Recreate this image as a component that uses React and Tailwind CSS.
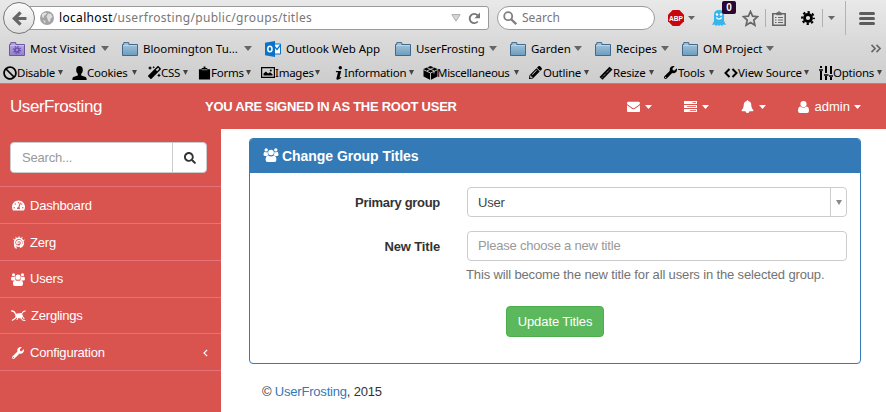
import React from 'react';
import {
  FaTachometerAlt, FaWrench, FaSearch, FaBan, FaMagic, FaPencilAlt,
} from 'react-icons/fa';

const ENVELOPE = 'M1792 710v794q0 66-47 113t-113 47h-1472q-66 0-113-47t-47-113v-794q44 49 101 87 362 246 497 345 57 42 92.5 65.5t94.5 48 110 24.5h2q51 0 110-24.5t94.5-48 92.5-65.5q170-123 498-345 57-39 100-87zm0-294q0 79-49 151t-122 123q-376 261-468 325-10 7-42.5 31t-54 38.5-52 32.5-57.5 27-50 9h-2q-23 0-50-9t-57.5-27-52-32.5-54-38.5-42.5-31q-91-64-262-182.5t-205-142.5q-62-42-117-115.5t-55-136.5q0-78 41.5-130t118.5-52h1472q65 0 112.5 47t47.5 113z';
const BELL = 'M1728 1408q0 52-38 90t-90 38h-448q0 106-75 181t-181 75-181-75-75-181h-448q-52 0-90-38t-38-90q50-42 91-88t85-119.5 74.5-158.5 50-206 19.5-260q0-152 117-282.5t307-158.5q-8-19-8-39 0-40 28-68t68-28 68 28 28 68q0 20-8 39 190 28 307 158.5t117 282.5q0 139 19.5 260t50 206 74.5 158.5 85 119.5 91 88z';

function Glyph({ d, box = '0 0 1792 1792', className }) {
  return (
    <svg viewBox={box} className={className} fill="currentColor"><path d={d} /></svg>
  );
}

function Users({ className }) {
  return (
    <svg viewBox="0 0 15 14" className={className} fill="currentColor">
      <circle cx="2.700" cy="1.900" r="1.700" />
      <circle cx="12.300" cy="1.900" r="1.700" />
      <circle cx="7.500" cy="4.500" r="2.800" />
      <path d="M1.200 3.700q1.500 1 3 .2-.3 2 .8 3.300-1 .1-1.700.8H1.600Q0 8 0 6.700 0 4 1.200 3.700zM13.800 3.700q-1.500 1-3 .2.3 2-.8 3.300 1 .1 1.700.8h1.700Q15 8 15 6.700 15 4 13.800 3.700z" />
      <path d="M4.600 7.500q2.900 1.800 5.800 0 2.500.3 2.500 4.300 0 2.200-2 2.200H4.100q-2 0-2-2.200 0-4 2.500-4.300z" />
    </svg>
  );
}

function User({ className }) {
  return (
    <svg viewBox="0 0 11 12" className={className} fill="currentColor">
      <circle cx="5.500" cy="3.100" r="3.100" />
      <path d="M2.700 5.500q2.800 2.400 5.600 0Q11 5.500 11 9.800q0 2.200-2 2.200H2q-2 0-2-2.200 0-4.300 2.700-4.300z" />
    </svg>
  );
}

function Triangle({ className }) {
  return <svg viewBox="0 0 8 4" preserveAspectRatio="none" className={'shrink-0 ' + className} fill="currentColor"><path d="M0 0h8L4 4z" /></svg>;
}

function Folder({ purple }) {
  const line = purple ? '#6b56a3' : '#41698c';
  return (
    <svg viewBox="0 0 16 14" className="h-[14px] w-4 shrink-0">
      <defs>
        <linearGradient id={purple ? 'fp' : 'fb'} x1="0" y1="0" x2="0" y2="1">
          <stop offset="0" stopColor={purple ? '#b9acdf' : '#a9c8dd'} />
          <stop offset="1" stopColor={purple ? '#9381cb' : '#6d9cbe'} />
        </linearGradient>
      </defs>
      <path d="M.5 13.5V2.500h1.300V.6h5v1.900h8.700v11z" fill={purple ? 'url(#fp)' : 'url(#fb)'} stroke={line} />
      <path d="M1 3.500h14" stroke="#fff" strokeOpacity=".35" />
      {purple && (
        <g fill="none" stroke="#6a50b0">
          <circle cx="8" cy="8" r="2" strokeWidth="1.700" />
          <circle cx="8" cy="8" r="3.500" strokeWidth="1.300" strokeDasharray="1.370 1.370" />
        </g>
      )}
    </svg>
  );
}

function Outlook() {
  return (
    <svg viewBox="0 0 16 16" className="h-4 w-4 shrink-0">
      <path d="M8 3h7.500v10H8z" fill="#fff" stroke="#0a72c8" />
      <path d="M9 5l3 3.500L15.500 4" fill="none" stroke="#0a72c8" strokeWidth="1.300" />
      <path d="M0 1.800L10 0v16L0 14.200z" fill="#0a72c8" />
      <ellipse cx="4.900" cy="8" rx="2.100" ry="2.800" fill="none" stroke="#fff" strokeWidth="1.500" />
    </svg>
  );
}

function Bookmark({ icon, label, width, arrow = true }) {
  return (
    <div className="flex items-center">
      {icon}
      <span className={'ml-[5px] whitespace-nowrap ' + width}>{label}</span>
      {arrow && <Triangle className="-mr-px ml-[6px] h-[5px] w-[8px] text-[#666]" />}
    </div>
  );
}

function Tool({ icon, label, width, text, gap = '' }) {
  return (
    <div className={'flex shrink-0 items-center ' + width}>
      <span className="flex w-[15px] shrink-0 justify-center">{icon}</span>
      <span className={'whitespace-nowrap ' + text + ' ' + gap}>{label}</span>
      <Triangle className="ml-[2px] h-[5px] w-[5px] text-[#444]" />
    </div>
  );
}

const clipboard = (
  <svg viewBox="0 0 14 14" className="h-[14px] w-[13px]"><path d="M1 3h3V1.500h2V0h2v1.500h2V3h3v11H1z" /><path d="M4 3.500h6" stroke="#d0d0d0" strokeWidth=".7" /></svg>
);
const person = (
  <svg viewBox="0 0 15 14" className="h-[14px] w-[15px]"><ellipse cx="7.500" cy="4" rx="3.300" ry="4" /><path d="M5.800 7h3.400v2.500l4.500 1.500q1 .5 1 3H.3q0-2.500 1-3l4.500-1.500z" /></svg>
);
const ruler = (
  <svg viewBox="0 0 14 14" className="h-[14px] w-[14px]"><path d="M.5 11L10.500 .8 13.500 3.500 3.500 13.700z" /><path d="M3 11.500L11.500 2.800" stroke="#d0d0d0" strokeDasharray="1 1" /></svg>
);
const sliders = (
  <svg viewBox="0 0 14 14" className="h-[14px] w-[14px]" stroke="#000" strokeWidth="2"><path d="M2 0v2M2 5v9M7 0v7M7 10v4M12 0v8M12 11v3" /><path d="M0 4h4M5 9h4.500M10 10h4" strokeWidth="1.500" /></svg>
);
const info = (
  <svg viewBox="0 0 8 14" className="h-[14px] w-[8px]"><circle cx="5.300" cy="1.700" r="1.700" /><path d="M1 5h5.200L4.500 11.500l1.800-.6-.3 1.100Q4 13.800 2.200 13.800 1 13.500 1.500 12L3 6.300H.8z" /></svg>
);
const cube = (
  <svg viewBox="0 0 15 14" className="h-[14px] w-[15px]"><path d="M7.500 0L14.500 3v7.500L7.500 14 .5 10.500V3z" /><path d="M.5 3.700L7.500 7l7-3.300M7.500 7v7M4 1.600l7 3.300v2.600M11 1.600L4 4.900" fill="none" stroke="#d0d0d0" strokeWidth=".9" /></svg>
);
const picture = (
  <svg viewBox="0 0 14 11" className="h-[11px] w-[14px]"><path d="M.6 .6h12.800v9.800H.6z" fill="none" stroke="#000" strokeWidth="1.200" /><path d="M2.500 8.500V6.500L5 4.500l2 2 2-1.300 2.500 2v1.300z" /><circle cx="9.800" cy="3.400" r="1" /></svg>
);
const brackets = (
  <svg viewBox="0 0 14 10" className="h-[10px] w-[14px]" fill="none" stroke="#000" strokeWidth="2"><path d="M5.500 1L1.500 5l4 4M8.500 1l4 4-4 4" /></svg>
);

const tools = [
  { icon: <FaBan className="h-[14px] w-[14px]" />, label: 'Disable', width: 'w-[70px]', text: 'w-[39px]' },
  { icon: person, label: 'Cookies', width: 'w-[75px]', text: 'w-[43px]' },
  { icon: <FaMagic className="h-[13px] w-[13px]" />, label: 'CSS', width: 'w-[50px]', text: 'w-[20px]', gap: '-ml-[1px]' },
  { icon: clipboard, label: 'Forms', width: 'w-[63px]', text: 'w-[33px]', gap: '-ml-[1px]' },
  { icon: picture, label: 'Images', width: 'w-[71px]', text: 'w-[38px]' },
  { icon: info, label: 'Information', width: 'w-[92px]', text: 'w-[63px]', gap: '-ml-[2px]' },
  { icon: cube, label: 'Miscellaneous', width: 'w-[105px]', text: 'w-[75px] tracking-[-0.300px]', gap: '-ml-px' },
  { icon: <FaPencilAlt className="h-[13px] w-[13px]" />, label: 'Outline', width: 'w-[70px]', text: 'w-[39px]' },
  { icon: ruler, label: 'Resize', width: 'w-[65px]', text: 'w-[34px]' },
  { icon: <FaWrench className="h-[13px] w-[13px]" />, label: 'Tools', width: 'w-[60px]', text: 'w-[29px]' },
  { icon: brackets, label: 'View Source', width: 'w-[95px]', text: 'w-[64px] tracking-[-0.100px]' },
  { icon: sliders, label: 'Options', width: 'w-[66px]', text: 'w-[42px]' },
];

function Chrome() {
  return (
    <header className="h-[84px] overflow-hidden border-b border-[#8f8f8f] bg-linear-to-b from-[#e9e9e9] via-[#d9d9d9] to-[#cdcdcd] font-['Noto_Sans',sans-serif] text-black">
      <div className="flex h-[36px] items-center">
        <div className="relative z-10 ml-[3px] flex h-8 w-8 shrink-0 items-center justify-center rounded-full border border-[#777] bg-linear-to-b from-[#fafafa] to-[#dedede]">
          <svg viewBox="0 0 14 14" className="h-[15px] w-[15px]" fill="none" stroke="#666" strokeWidth="3"><path d="M13.500 7H3M8 1.200L2.200 7 8 12.800" /></svg>
        </div>
        <div className="-ml-[6px] flex h-6 w-[460px] shrink-0 items-center rounded-r-[3px] border border-[#9a9a9a] bg-white pl-[10px]">
          <svg viewBox="0 0 14 14" className="h-[14px] w-[14px] shrink-0"><circle cx="7" cy="7" r="7" fill="#a3a3a3" /><path d="M2 3l3-1.500 2 .5-1.500 2L4 5v2L2 6zM8 2.500l3 .5 1.500 3-2 2-.5 3-2-1-.5-2.500L6.500 6zM3 9l2.500 1-.5 2.500z" fill="#dedede" /></svg>
          <span className="ml-[5px] w-[255px] whitespace-nowrap text-[12px] tracking-[0.330px] text-[#777]"><span className="text-black">localhost</span>/userfrosting/public/groups/titles</span>
          <svg viewBox="0 0 10 8" className="ml-auto h-[8px] w-[10px]"><path d="M.8 .6h8.400L5 7.200z" fill="#d5d5d5" stroke="#b0b0b0" /></svg>
          <svg viewBox="0 0 13 13" className="mr-[7px] ml-[7px] h-[13px] w-[13px]"><path d="M9.800 9.500A4.600 4.600 0 1 1 9.500 3.200" fill="none" stroke="#777" strokeWidth="1.900" /><path d="M12 .5v5.800H6.500z" fill="#777" /></svg>
        </div>
        <div className="ml-2 flex h-6 w-[158px] shrink-0 items-center rounded-full border border-[#9a9a9a] bg-white pl-[5px]">
          <svg viewBox="0 0 14 14" className="h-[14px] w-[14px]" fill="none" stroke="#808080"><circle cx="5.200" cy="5.200" r="4" strokeWidth="1.800" /><path d="M8.200 8.200l5 5" strokeWidth="2.300" /></svg>
          <span className="ml-[5px] text-[12px] text-[#777]">Search</span>
        </div>
        <svg viewBox="0 0 16 16" className="ml-[13px] h-4 w-4 shrink-0"><path d="M4.700 0h6.600L16 4.700v6.600L11.300 16H4.700L0 11.300V4.700z" fill="#c9060c" /><text x="8" y="10.700" textAnchor="middle" fontSize="7.500" fontWeight="bold" fill="#fff" fontFamily="Liberation Sans" textLength="14" lengthAdjust="spacingAndGlyphs">ABP</text></svg>
        <Triangle className="ml-[4px] h-[4px] w-[7px] text-[#666]" />
        <div className="relative ml-[17px] h-4 w-[14px] shrink-0">
          <svg viewBox="0 0 14 16" className="h-4 w-[14px]"><path d="M2 5q0-5 5-5t5 5v6l2 4-2.500-.5L10 16l-1.700-1.300L7 16l-1.500-1.300L4 16l-1.500-1.500L0 15l2-4z" fill="#35b5ee" /><path d="M4.200 7.500q2.800 3.200 5.600 0" fill="none" stroke="#fff" strokeWidth="1.200" /><circle cx="5" cy="4.500" r="1.200" fill="#fff" /><circle cx="9" cy="4.500" r="1.200" fill="#fff" /></svg>
          <span className="absolute -top-[9px] left-[10px] flex h-[13px] w-[14px] items-center justify-center rounded-[2px] bg-[#2a0633] font-['Liberation_Sans',sans-serif] text-[10px] leading-none font-bold text-white">0</span>
        </div>
        <svg viewBox="0 0 17 17" className="ml-[16px] h-[17px] w-[17px] shrink-0" fill="none" stroke="#666" strokeWidth="1.700"><path d="M8.500 1.500l2.100 4.700 5 .5-3.800 3.400 1.100 5.100-4.400-2.600-4.400 2.600 1.100-5.100L1.400 6.700l5-.5z" /></svg>
        <span className="ml-[6px] h-[18px] w-px bg-[#b0b0b0]" />
        <svg viewBox="0 0 14 15" className="ml-[6px] h-[15px] w-[14px] shrink-0" fill="none" stroke="#666" strokeWidth="1.600"><path d="M4.500 2.700H.8v11.500h12.400V2.700H9.500" /><path d="M4.500 3.700V2l1.500-.2L7 .5l1 1.300 1.500 .2v1.700z" fill="#666" strokeWidth="1" /><path d="M3 6.500h1.500M6 6.500h5M3 9h1.500M6 9h5M3 11.500h1.500M6 11.500h5" strokeWidth="1.200" /></svg>
        <svg viewBox="0 0 16 16" className="ml-[15px] h-[14px] w-[14px] shrink-0" fill="none" stroke="#000"><circle cx="8" cy="8" r="4" strokeWidth="3.200" /><circle cx="8" cy="8" r="6.700" strokeWidth="2.400" strokeDasharray="2.630 2.630" strokeDashoffset="1.300" /></svg>
        <span className="ml-[7px] h-[18px] w-px bg-[#b0b0b0]" />
        <Triangle className="ml-[5px] h-[4px] w-[7px] text-[#666]" />
        <span className="ml-[10px] h-[34px] w-px bg-[#b3b3b3]" />
        <div className="ml-[13px] flex w-4 shrink-0 flex-col gap-[2px]">
          <span className="h-[3px] rounded bg-[#5c5c5c]" /><span className="h-[3px] rounded bg-[#5c5c5c]" /><span className="h-[3px] rounded bg-[#5c5c5c]" />
        </div>
      </div>
      <nav className="flex h-[25px] items-center gap-[14px] pl-[9px] text-[11.500px] tracking-[-0.050px]">
        <Bookmark icon={<Folder purple />} label="Most Visited" width="w-[65px]" />
        <Bookmark icon={<Folder />} label="Bloomington Tu..." width="w-[95px]" />
        <Bookmark icon={<Outlook />} label="Outlook Web App" width="w-[95px]" arrow={false} />
        <Bookmark icon={<Folder />} label="UserFrosting" width="w-[67px]" />
        <Bookmark icon={<Folder />} label="Garden" width="w-[37px]" />
        <Bookmark icon={<Folder />} label="Recipes" width="w-[39px]" />
        <Bookmark icon={<Folder />} label="OM Project" width="w-[57px]" />
        <svg viewBox="0 0 12 10" className="mr-[4px] ml-auto h-[9px] w-3" fill="none" stroke="#666" strokeWidth="1.800"><path d="M1 1l4 4-4 4M6.500 1l4 4-4 4" /></svg>
      </nav>
      <nav className="flex h-[23px] items-center pl-[2px] text-[11.500px] tracking-[-0.250px]">
        {tools.map((t) => <Tool key={t.label} {...t} />)}
      </nav>
    </header>
  );
}

function Caret() {
  return <Triangle className="ml-[5px] h-[4px] w-[7px]" />;
}

function SideItem({ icon, label, gap = 'ml-[5px]', last }) {
  return (
    <li className="flex h-[36.850px] items-center border-b border-[#e8717a] pt-px pl-[11px]">
      <span className="flex w-[14px] justify-center">{icon}</span>
      <span className={gap}>{label}</span>
      {last && <svg viewBox="0 0 6 9" className="mr-[13px] ml-auto h-[8px] w-[5px]" fill="none" stroke="#fff" strokeWidth="1.400"><path d="M5 .7L1.200 4.500 5 8.300" /></svg>}
    </li>
  );
}

const zerg = (
  <svg viewBox="0 0 14 14" className="h-[13px] w-[13px]" fill="none" stroke="#fff">
    <path d="M6 8.800Q4.500 7.500 5.600 5.600 7.500 4 9.500 5.500q1.600 2.500-.5 4.800-3 1.700-5.500-.8Q1.800 6.500 4 3.700 7 1.600 10 3q3 2.300 2 6-1 2.500-3.500 3.200M3 9.500Q2.500 12 5 13.300" strokeWidth="1.600" />
    <path d="M3.500 4.500L1.300 3.300M5 3L4 1M7.500 2.300L7.700 .2M10 2.800L11.300 1M12 5l1.700-.8" strokeWidth=".9" />
    <circle cx="7.300" cy="7.500" r=".7" />
  </svg>
);
const zergling = (
  <svg viewBox="0 0 15 12" className="h-[12px] w-[15px] shrink-0" fill="none" stroke="#fff" strokeLinecap="round">
    <path d="M.7 1Q3.500 .8 4 3 4.300 4.800 6 5" strokeWidth="1.300" />
    <path d="M5 4.200L10.500 3.500 11.500 6.500 9.500 8 5.500 7.200z" fill="#fff" strokeWidth="1" />
    <path d="M10.500 4L12.500 1.500 14.300 1M11.500 6.500L13 8.500M10 7.500L11.500 10l2.500.5M5.500 6.500L4 8.500 1.300 10.300M7 7.500L6 9.500" strokeWidth="1.100" />
  </svg>
);

export default function App() {
  return (
    <div className="h-[412px] w-[886px] overflow-hidden bg-white font-['Liberation_Sans',Arial,sans-serif] text-[13px] text-[#333]">
      <Chrome />
      <div className="flex h-[45px] items-center bg-[#d9534f] text-white">
        <span className="ml-[10px] w-[195px] text-[17px] tracking-[-0.450px]">UserFrosting</span>
        <span className="text-[13px] font-bold tracking-[-0.260px] whitespace-nowrap">YOU ARE SIGNED IN AS THE ROOT USER</span>
        <div className="ml-auto flex items-center pr-[25px]">
          <Glyph d={ENVELOPE} className="h-[13px] w-[13px]" /><Caret />
          <svg viewBox="0 0 13 11" className="ml-[32px] h-[11px] w-[13px]"><path d="M0 0h13v3H0zM0 4h13v3H0zM0 8h13v3H0z" fill="#fff" /><path d="M8.500 1.500H12M3 5.500h9M6 9.500h6" stroke="#d9534f" strokeWidth=".8" /></svg><Caret />
          <Glyph d={BELL} className="ml-[32px] h-[13px] w-[13px]" /><Caret />
          <User className="ml-[32px] h-[12px] w-[11px]" />
          <span className="ml-[6px]">admin</span><Triangle className="ml-[4px] h-[4px] w-[7px]" />
        </div>
      </div>
      <div className="flex h-[283px]">
        <aside className="w-[221px] shrink-0 bg-[#d9534f] tracking-[-0.200px] text-white">
          <div className="flex h-[58px] border-b border-[#e8717a] pt-[13px] pl-[10px]">
            <div className="flex h-[31px] w-[197px] overflow-hidden rounded-[4px] border border-[#ccc] bg-white">
              <span className="flex-1 pt-[5px] pl-[11px] text-[#999]">Search...</span>
              <span className="flex w-[34px] items-center justify-center border-l border-[#ccc]"><FaSearch className="h-[12px] w-[12px] text-[#333]" /></span>
            </div>
          </div>
          <ul>
            <SideItem icon={<FaTachometerAlt className="h-[13px] w-[13px]" />} label="Dashboard" />
            <SideItem icon={zerg} label="Zerg" />
            <SideItem icon={<Users className="h-[13px] w-[14px]" />} label="Users" />
            <SideItem icon={zergling} label="Zerglings" gap="ml-[6px]" />
            <SideItem icon={<FaWrench className="h-[12px] w-[12px]" />} label="Configuration" last />
          </ul>
        </aside>
        <main className="flex-1 pt-[9px] pl-[28px]">
          <section className="h-[226px] w-[612px] overflow-hidden rounded-[4px] border border-[#337ab7]">
            <h3 className="flex h-[34px] items-center bg-[#337ab7] pl-[13px] text-[14px] font-bold tracking-[-0.050px] text-white">
              <Users className="mr-[3px] mb-[2px] h-[14px] w-[16px]" />
              Change Group Titles
            </h3>
            <div className="grid grid-cols-[190px_380px] gap-x-[27px] pt-[14px]">
              <label className="pt-[6px] text-right font-bold tracking-[-0.300px]">Primary group</label>
              <div className="flex h-[30px] rounded-[4px] border border-[#ccc]">
                <span className="flex-1 pt-[5px] pl-[10px] tracking-[-0.200px] text-[#444]">User</span>
                <span className="flex w-4 items-center justify-center border-l border-[#ccc]"><Triangle className="h-[5px] w-[6px] text-[#888]" /></span>
              </div>
              <label className="mt-[14px] pt-[6px] text-right font-bold tracking-[-0.150px]">New Title</label>
              <div className="mt-[14px] h-[30px] rounded-[4px] border border-[#ccc] pt-[4px] pl-[10px] tracking-[-0.200px] text-[#999]">Please choose a new title</div>
              <p className="col-start-2 mt-[4px] -ml-px tracking-[-0.140px] whitespace-nowrap text-[#737373]">This will become the new title for all users in the selected group.</p>
            </div>
            <button className="mt-[21px] ml-[256px] flex h-[31px] w-[98px] items-center justify-center rounded-[4px] border border-[#4cae4c] bg-[#5cb85c] pt-px tracking-[-0.100px] text-white">Update Titles</button>
          </section>
          <footer className="mt-[18px] ml-[13px] tracking-[-0.200px]">© <span className="text-[#337ab7]">UserFrosting</span>, 2015</footer>
        </main>
      </div>
    </div>
  );
}
